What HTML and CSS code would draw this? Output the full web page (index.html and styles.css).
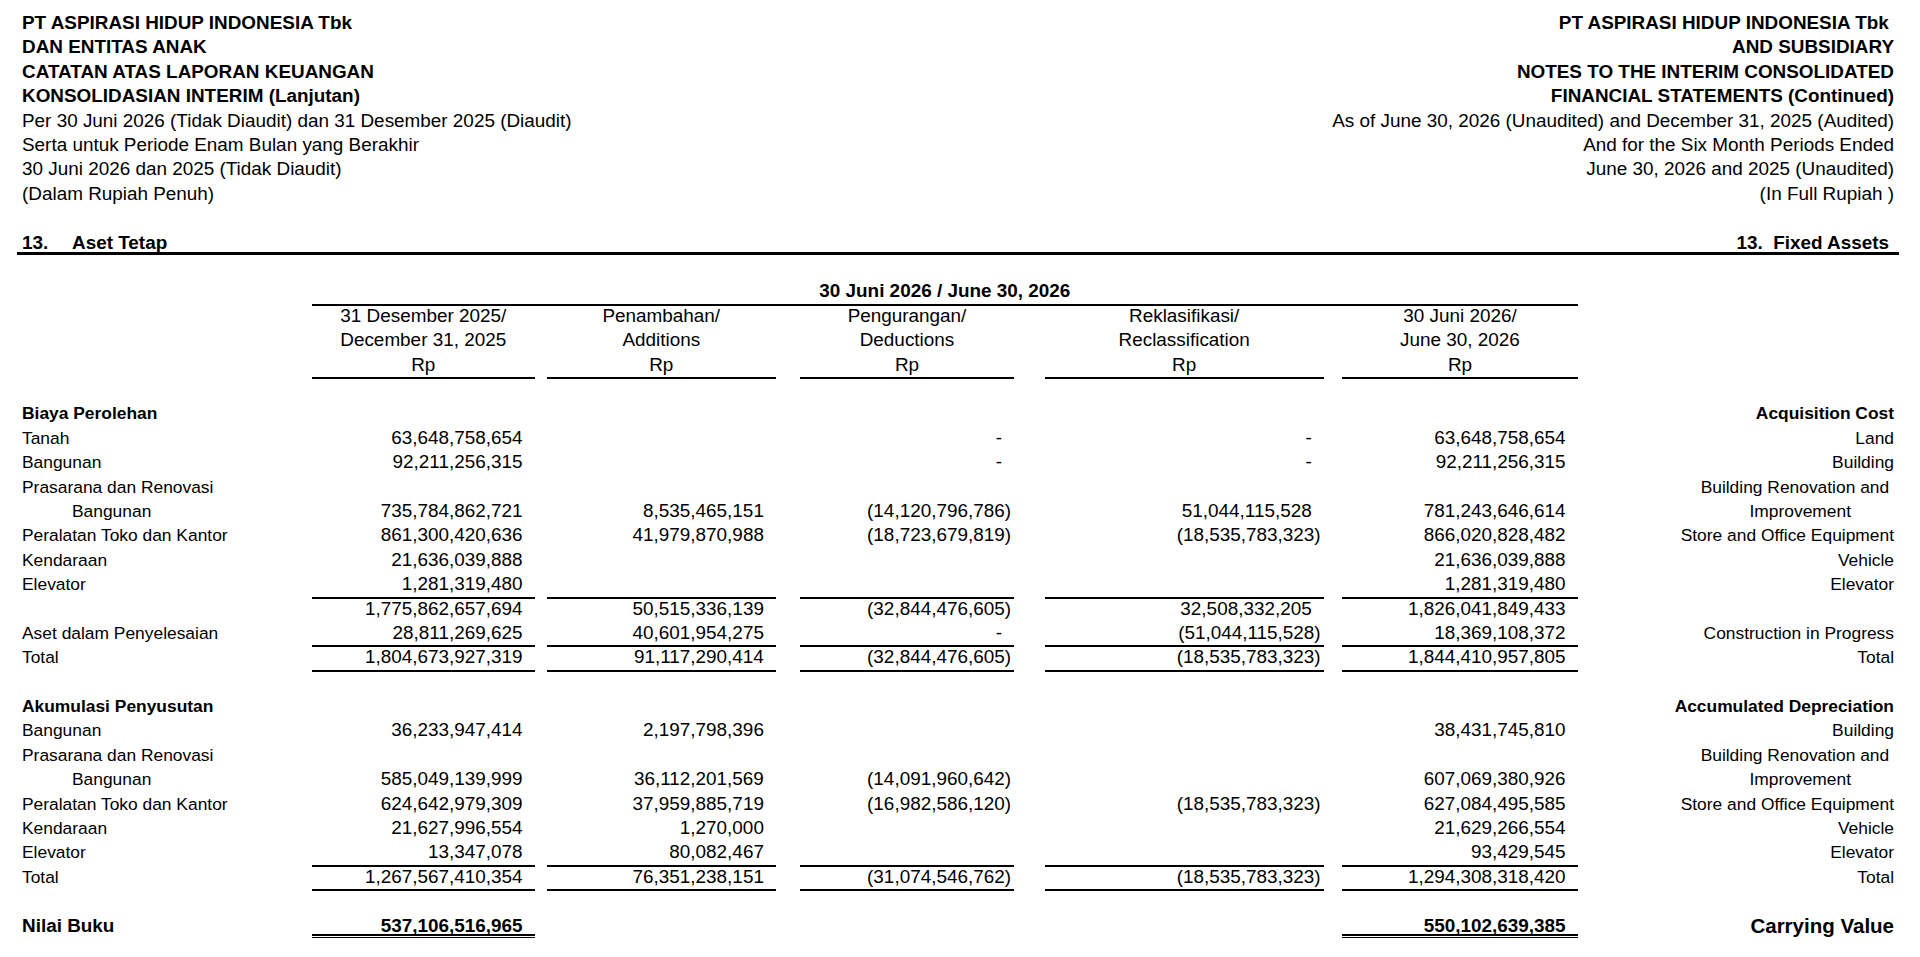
FILE: index.html
```html
<!DOCTYPE html>
<html lang="id">
<head>
<meta charset="utf-8">
<title>Catatan 13 - Aset Tetap</title>
<link rel="stylesheet" href="styles.css">
</head>
<body>
<div class="page">
  <header class="top">
    <div class="top-left">
      <div class="b">PT ASPIRASI HIDUP INDONESIA Tbk</div>
      <div class="b">DAN ENTITAS ANAK</div>
      <div class="b">CATATAN ATAS LAPORAN KEUANGAN</div>
      <div class="b">KONSOLIDASIAN INTERIM (Lanjutan)</div>
      <div>Per 30 Juni 2026 (Tidak Diaudit) dan 31 Desember 2025 (Diaudit)</div>
      <div>Serta untuk Periode Enam Bulan yang Berakhir</div>
      <div>30 Juni 2026 dan 2025 (Tidak Diaudit)</div>
      <div>(Dalam Rupiah Penuh)</div>
    </div>
    <div class="top-right">
      <div class="b">PT ASPIRASI HIDUP INDONESIA Tbk&nbsp;</div>
      <div class="b">AND SUBSIDIARY</div>
      <div class="b">NOTES TO THE INTERIM CONSOLIDATED</div>
      <div class="b">FINANCIAL STATEMENTS (Continued)</div>
      <div>As of June 30, 2026 (Unaudited) and December 31, 2025 (Audited)</div>
      <div>And for the Six Month Periods Ended</div>
      <div>June 30, 2026 and 2025 (Unaudited)</div>
      <div>(In Full Rupiah )</div>
    </div>
  </header>

  <div class="sec">
    <div class="b"><span class="secno">13.</span>Aset Tetap</div>
    <div class="b sec-en">13.&nbsp; Fixed Assets</div>
  </div>

  <div class="table">
    <div class="row title-row">
      <div></div>
      <div class="span-all b">30 Juni 2026 / June 30, 2026</div>
    </div>
    <div class="row head-row">
      <div></div>
      <div class="hd c1">31 Desember 2025/<br>December 31, 2025<br>Rp</div>
      <div class="hd c2">Penambahan/<br>Additions<br>Rp</div>
      <div class="hd c3">Pengurangan/<br>Deductions<br>Rp</div>
      <div class="hd c4">Reklasifikasi/<br>Reclassification<br>Rp</div>
      <div class="hd c5">30 Juni 2026/<br>June 30, 2026<br>Rp</div>
      <div></div>
    </div>
    <div class="row"></div>

    <div class="row">
      <div class="lbl b">Biaya Perolehan</div>
      <div class="c1"></div><div class="c2"></div><div class="c3"></div><div class="c4"></div><div class="c5"></div>
      <div class="en b">Acquisition Cost</div>
    </div>
    <div class="row">
      <div class="lbl">Tanah</div>
      <div class="num c1">63,648,758,654</div>
      <div class="num c2"></div>
      <div class="num c3">-</div>
      <div class="num c4">-</div>
      <div class="num c5">63,648,758,654</div>
      <div class="en">Land</div>
    </div>
    <div class="row">
      <div class="lbl">Bangunan</div>
      <div class="num c1">92,211,256,315</div>
      <div class="num c2"></div>
      <div class="num c3">-</div>
      <div class="num c4">-</div>
      <div class="num c5">92,211,256,315</div>
      <div class="en">Building</div>
    </div>
    <div class="row">
      <div class="lbl">Prasarana dan Renovasi</div>
      <div class="c1"></div><div class="c2"></div><div class="c3"></div><div class="c4"></div><div class="c5"></div>
      <div class="en">Building Renovation and&nbsp;</div>
    </div>
    <div class="row">
      <div class="lbl ind">Bangunan</div>
      <div class="num c1">735,784,862,721</div>
      <div class="num c2">8,535,465,151</div>
      <div class="num neg c3">(14,120,796,786)</div>
      <div class="num c4">51,044,115,528</div>
      <div class="num c5">781,243,646,614</div>
      <div class="en en-mid">Improvement</div>
    </div>
    <div class="row">
      <div class="lbl">Peralatan Toko dan Kantor</div>
      <div class="num c1">861,300,420,636</div>
      <div class="num c2">41,979,870,988</div>
      <div class="num neg c3">(18,723,679,819)</div>
      <div class="num neg c4">(18,535,783,323)</div>
      <div class="num c5">866,020,828,482</div>
      <div class="en">Store and Office Equipment</div>
    </div>
    <div class="row">
      <div class="lbl">Kendaraan</div>
      <div class="num c1">21,636,039,888</div>
      <div class="num c2"></div>
      <div class="num c3"></div>
      <div class="num c4"></div>
      <div class="num c5">21,636,039,888</div>
      <div class="en">Vehicle</div>
    </div>
    <div class="row">
      <div class="lbl">Elevator</div>
      <div class="num ul c1">1,281,319,480</div>
      <div class="num ul c2"></div>
      <div class="num ul c3"></div>
      <div class="num ul c4"></div>
      <div class="num ul c5">1,281,319,480</div>
      <div class="en">Elevator</div>
    </div>
    <div class="row">
      <div class="lbl"></div>
      <div class="num c1">1,775,862,657,694</div>
      <div class="num c2">50,515,336,139</div>
      <div class="num neg c3">(32,844,476,605)</div>
      <div class="num c4">32,508,332,205</div>
      <div class="num c5">1,826,041,849,433</div>
      <div class="en"></div>
    </div>
    <div class="row">
      <div class="lbl">Aset dalam Penyelesaian</div>
      <div class="num ul c1">28,811,269,625</div>
      <div class="num ul c2">40,601,954,275</div>
      <div class="num ul c3">-</div>
      <div class="num neg ul c4">(51,044,115,528)</div>
      <div class="num ul c5">18,369,108,372</div>
      <div class="en">Construction in Progress</div>
    </div>
    <div class="row">
      <div class="lbl">Total</div>
      <div class="num ul c1">1,804,673,927,319</div>
      <div class="num ul c2">91,117,290,414</div>
      <div class="num neg ul c3">(32,844,476,605)</div>
      <div class="num neg ul c4">(18,535,783,323)</div>
      <div class="num ul c5">1,844,410,957,805</div>
      <div class="en">Total</div>
    </div>
    <div class="row"></div>

    <div class="row">
      <div class="lbl b">Akumulasi Penyusutan</div>
      <div class="c1"></div><div class="c2"></div><div class="c3"></div><div class="c4"></div><div class="c5"></div>
      <div class="en b">Accumulated Depreciation</div>
    </div>
    <div class="row">
      <div class="lbl">Bangunan</div>
      <div class="num c1">36,233,947,414</div>
      <div class="num c2">2,197,798,396</div>
      <div class="num c3"></div>
      <div class="num c4"></div>
      <div class="num c5">38,431,745,810</div>
      <div class="en">Building</div>
    </div>
    <div class="row">
      <div class="lbl">Prasarana dan Renovasi</div>
      <div class="c1"></div><div class="c2"></div><div class="c3"></div><div class="c4"></div><div class="c5"></div>
      <div class="en">Building Renovation and&nbsp;</div>
    </div>
    <div class="row">
      <div class="lbl ind">Bangunan</div>
      <div class="num c1">585,049,139,999</div>
      <div class="num c2">36,112,201,569</div>
      <div class="num neg c3">(14,091,960,642)</div>
      <div class="num c4"></div>
      <div class="num c5">607,069,380,926</div>
      <div class="en en-mid">Improvement</div>
    </div>
    <div class="row">
      <div class="lbl">Peralatan Toko dan Kantor</div>
      <div class="num c1">624,642,979,309</div>
      <div class="num c2">37,959,885,719</div>
      <div class="num neg c3">(16,982,586,120)</div>
      <div class="num neg c4">(18,535,783,323)</div>
      <div class="num c5">627,084,495,585</div>
      <div class="en">Store and Office Equipment</div>
    </div>
    <div class="row">
      <div class="lbl">Kendaraan</div>
      <div class="num c1">21,627,996,554</div>
      <div class="num c2">1,270,000</div>
      <div class="num c3"></div>
      <div class="num c4"></div>
      <div class="num c5">21,629,266,554</div>
      <div class="en">Vehicle</div>
    </div>
    <div class="row">
      <div class="lbl">Elevator</div>
      <div class="num ul c1">13,347,078</div>
      <div class="num ul c2">80,082,467</div>
      <div class="num ul c3"></div>
      <div class="num ul c4"></div>
      <div class="num ul c5">93,429,545</div>
      <div class="en">Elevator</div>
    </div>
    <div class="row">
      <div class="lbl">Total</div>
      <div class="num ul c1">1,267,567,410,354</div>
      <div class="num ul c2">76,351,238,151</div>
      <div class="num neg ul c3">(31,074,546,762)</div>
      <div class="num neg ul c4">(18,535,783,323)</div>
      <div class="num ul c5">1,294,308,318,420</div>
      <div class="en">Total</div>
    </div>
    <div class="row"></div>

    <div class="row">
      <div class="b">Nilai Buku</div>
      <div class="num dbl b c1">537,106,516,965</div>
      <div class="num c2"></div>
      <div class="num c3"></div>
      <div class="num c4"></div>
      <div class="num dbl b c5">550,102,639,385</div>
      <div class="en en-big b">Carrying Value</div>
    </div>
  </div>
</div>
</body>
</html>
```

FILE: styles.css
```css
html, body {
  margin: 0;
  padding: 0;
  background: #fff;
}

body {
  font-family: "Liberation Sans", Arial, sans-serif;
  font-size: 18.9px;
  line-height: 24.4px;
  color: #000;
}

.page {
  padding: 11px 26px 0 22px;
}

.b {
  font-weight: bold;
}

/* ---------- header ---------- */
.top {
  display: flex;
  justify-content: space-between;
  white-space: nowrap;
}

.top-right {
  text-align: right;
}

/* ---------- section title ---------- */
.sec {
  display: flex;
  justify-content: space-between;
  margin: 24.4px -5px 24.4px;
  padding: 2px 5px 0;
  height: 24.4px;
  box-sizing: border-box;
  line-height: 19.4px;
  border-bottom: 3px solid #000;
}

.secno {
  display: inline-block;
  width: 50px;
}

.sec-en {
  padding-right: 5px;
}

/* ---------- table ---------- */
.row {
  display: grid;
  grid-template-columns: 290px 222.5px 241.4px 238.1px 309.7px 253.9px 1fr;
  height: 24.4px;
}

.row > div {
  box-sizing: border-box;
  line-height: 24.4px;
  white-space: nowrap;
}

.c2 { margin-left: 12.2px; }
.c3 { margin-left: 24.1px; }
.c4 { margin-left: 30.7px; }
.c5 { margin-left: 18.7px; }

.title-row {
  height: 23.6px;
  margin-bottom: 0.8px;
}

.title-row .span-all {
  grid-column: 2 / 7;
  text-align: center;
  border-bottom: 2px solid #000;
}

.head-row {
  height: 72.6px;
  margin-bottom: 0.6px;
}

.head-row .hd {
  text-align: center;
  border-bottom: 2px solid #000;
}

.lbl,
.en {
  font-size: 17.4px;
}

.en {
  text-align: right;
}

.en-mid {
  padding-right: 43px;
}

.en-big {
  font-size: 20.5px;
}

.num {
  text-align: right;
  padding-right: 12px;
}

.num.neg {
  padding-right: 3px;
}

.row > .ul {
  border-bottom: 2px solid #000;
  margin-bottom: -1px;
}

.row > .dbl {
  height: 22.4px;
  border-bottom: 2px solid #000;
  box-shadow: 0 1px 0 #fff, 0 3px 0 #000;
  align-self: start;
}

.ind {
  padding-left: 50px;
}
```
